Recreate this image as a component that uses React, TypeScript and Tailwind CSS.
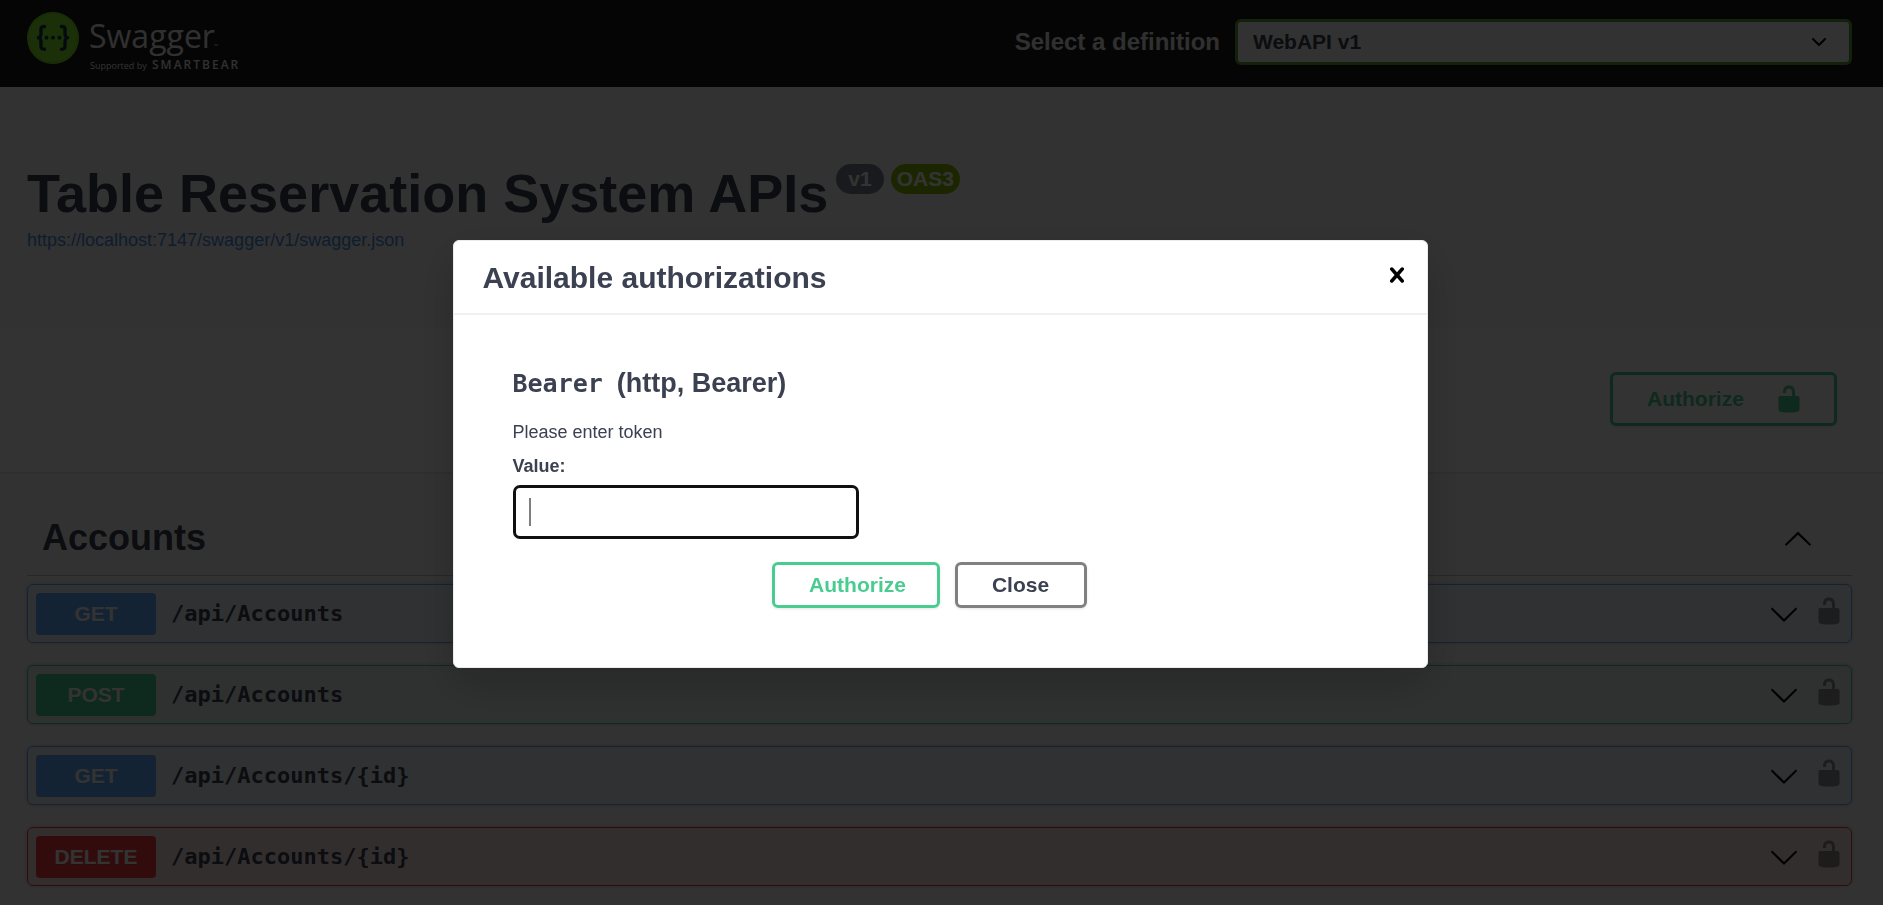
import { useState } from "react";

type Method = "GET" | "POST" | "DELETE";

interface Operation {
  method: Method;
  path: string;
}

const operations: Operation[] = [
  { method: "GET", path: "/api/Accounts" },
  { method: "POST", path: "/api/Accounts" },
  { method: "GET", path: "/api/Accounts/{id}" },
  { method: "DELETE", path: "/api/Accounts/{id}" },
];

const rowStyles: Record<Method, string> = {
  GET: "border-[#61affe] bg-[#61affe]/10",
  POST: "border-[#49cc90] bg-[#49cc90]/10",
  DELETE: "border-[#f93e3e] bg-[#f93e3e]/10",
};

const badgeStyles: Record<Method, string> = {
  GET: "bg-[#61affe]",
  POST: "bg-[#49cc90]",
  DELETE: "bg-[#f93e3e]",
};

function UnlockedIcon() {
  return (
    <svg viewBox="0 0 20 20" className="size-[30px] shrink-0 fill-current" aria-hidden="true">
      <path d="M15.8 8H14V5.6C14 2.703 12.665 1 10 1 7.334 1 6 2.703 6 5.6V6h2v-.801C8 3.754 8.797 3 10 3c1.203 0 2 .754 2 2.199V8H4c-.553 0-1 .646-1 1.199V17c0 .549.428 1.139.951 1.307l1.197.387C5.672 18.861 6.55 19 7.1 19h5.8c.549 0 1.428-.139 1.951-.307l1.196-.387c.524-.167.953-.757.953-1.306V9.199C17 8.646 16.352 8 15.8 8z" />
    </svg>
  );
}

function ArrowUpIcon() {
  return (
    <svg viewBox="0 0 20 20" className="size-[30px] shrink-0" aria-hidden="true">
      <path d="M17.418 14.908c.272.268.709.268.979 0s.271-.701 0-.969l-7.908-7.83c-.27-.268-.707-.268-.979 0l-7.908 7.83c-.27.268-.27.701 0 .969.271.268.709.268.979 0L10 7.767l7.418 7.141z" />
    </svg>
  );
}

function ArrowDownIcon() {
  return (
    <svg viewBox="0 0 20 20" className="size-[30px] shrink-0" aria-hidden="true">
      <path d="M17.418 6.109c.272-.268.709-.268.979 0s.271.701 0 .969l-7.908 7.83c-.27.268-.707.268-.979 0l-7.908-7.83c-.27-.268-.271-.701 0-.969.271-.268.709-.268.979 0L10 13.25l7.418-7.141z" />
    </svg>
  );
}

function CloseIcon() {
  return (
    <svg viewBox="0 0 20 20" className="size-[30px]" aria-hidden="true">
      <path d="M14.348 14.849c-.469.469-1.229.469-1.697 0L10 11.819l-2.651 3.029c-.469.469-1.229.469-1.697 0-.469-.469-.469-1.229 0-1.697l2.758-3.15-2.759-3.152c-.469-.469-.469-1.228 0-1.697.469-.469 1.228-.469 1.697 0L10 8.183l2.651-3.031c.469-.469 1.228-.469 1.697 0 .469.469.469 1.229 0 1.697l-2.758 3.152 2.758 3.15c.469.469.469 1.229 0 1.698z" />
    </svg>
  );
}

function Logo() {
  return (
    <svg viewBox="0 0 216 64" className="h-16 w-[216px]" role="img" aria-label="Swagger, supported by SmartBear">
      <circle cx="26" cy="26" r="26" fill="#85ea2d" />
      <circle cx="26" cy="26" r="24.6" fill="none" stroke="#7ad92b" strokeWidth="1.2" />
      <g fill="none" stroke="#173647" strokeWidth="3.4" strokeLinecap="round" strokeLinejoin="round">
        <path d="M17.5 14.500C13.500 14.200 13.800 17 14 19.500C14.200 23 14 25.400 11.500 25.700C14 26.200 14.200 28.600 14 32C13.800 35 13.800 37.500 17.500 37.300" />
        <path d="M34.500 14.500C38.500 14.200 38.200 17 38 19.500C37.800 23 38 25.400 40.500 25.700C38 26.200 37.800 28.600 38 32C38.200 35 38.200 37.500 34.500 37.300" />
      </g>
      <g fill="#173647">
        <circle cx="19.500" cy="25.700" r="1.900" />
        <circle cx="26" cy="25.700" r="1.900" />
        <circle cx="32.500" cy="25.700" r="1.900" />
      </g>
      <g fill="#f0f0f0" fontFamily="'Open Sans', 'Noto Sans', sans-serif">
        <text x="62" y="36" fontSize="32">Swagger</text>
        <text x="187" y="36" fontSize="5">™</text>
        <text x="63" y="57" fontSize="9">Supported by</text>
        <text x="125" y="57" fontSize="12" fontWeight="600" letterSpacing="2">SMARTBEAR</text>
      </g>
    </svg>
  );
}

function OperationRow({ method, path }: Operation) {
  return (
    <li
      className={`flex h-[59px] items-center rounded-md border pr-[7px] pl-2 shadow-[0_0_4px_rgba(0,0,0,0.19)] ${rowStyles[method]}`}
    >
      <button type="button" className="flex min-w-0 flex-1 items-center gap-[15px] text-left">
        <span
          className={`w-[120px] rounded-[4px] text-center text-[21px] leading-[42px] font-bold text-white [text-shadow:0_1px_0_rgba(0,0,0,0.1)] ${badgeStyles[method]}`}
        >
          {method}
        </span>
        <span className="flex-1 truncate font-['DejaVu_Sans_Mono',monospace] text-[22px] leading-[30px] font-bold">
          {path}
        </span>
        <span className="text-black">
          <ArrowDownIcon />
        </span>
      </button>
      <button type="button" aria-label="Authorization button unlocked" className="pb-[5px] pl-[15px] text-black opacity-40">
        <UnlockedIcon />
      </button>
    </li>
  );
}

function AuthorizationDialog({ onClose }: { onClose: () => void }) {
  const [token, setToken] = useState("");
  return (
    <div className="fixed inset-0 z-10 flex items-center justify-center bg-black/80 pt-[3px] pr-[3px]">
      <div
        role="dialog"
        aria-modal="true"
        aria-labelledby="dialog-title"
        className="w-full max-w-[975px] rounded-md border border-[#ebebeb] bg-white shadow-[0_15px_45px_rgba(0,0,0,0.2)]"
      >
        <div className="flex items-start justify-between border-b-2 border-[#f0f0f0] pt-[19px] pr-[15px] pb-[17px] pl-[29px]">
          <h3 id="dialog-title" className="text-[30px] leading-[36px] font-bold">
            Available authorizations
          </h3>
          <button type="button" aria-label="Close dialog" className="text-black" onClick={onClose}>
            <CloseIcon />
          </button>
        </div>
        <form className="px-[59px] pt-[52px] pb-[59px]" onSubmit={(event) => event.preventDefault()}>
          <h4 className="flex items-baseline gap-[14px] text-[27px] leading-[32px] font-bold">
            <code className="font-['DejaVu_Sans_Mono',monospace] text-[25px] leading-[32px]">Bearer</code>
            <span>(http, Bearer)</span>
          </h4>
          <p className="mt-[21px] text-[18px] leading-[22px]">Please enter token</p>
          <label htmlFor="token" className="mt-3 block text-[18px] leading-[22px] font-bold">
            Value:
          </label>
          <div className="relative mt-2 w-[346px]">
            <input
              id="token"
              type="text"
              value={token}
              onChange={(event) => setToken(event.target.value)}
              className="block h-[54px] w-full rounded-[7px] border-[3px] border-[#101010] bg-white px-[13px] text-[21px] caret-transparent outline-none"
            />
            {token === "" && <span className="absolute top-[13px] left-[16px] h-[28px] w-[2px] bg-[#7f7f7f]" />}
          </div>
          <div className="mt-[23px] flex justify-center gap-[15px] pr-[22px] text-[21px] leading-[24px] font-bold">
            <button
              type="submit"
              className="h-[46px] w-[168px] rounded-md border-[3px] border-[#49cc90] pl-1 text-[#49cc90] shadow-[0_1px_3px_rgba(0,0,0,0.1)]"
            >
              Authorize
            </button>
            <button
              type="button"
              onClick={onClose}
              className="h-[46px] w-[132px] rounded-md border-[3px] border-[#808080] shadow-[0_1px_3px_rgba(0,0,0,0.1)]"
            >
              Close
            </button>
          </div>
        </form>
      </div>
    </div>
  );
}

export default function App() {
  const [dialogOpen, setDialogOpen] = useState(true);
  return (
    <div className="min-h-screen bg-[#fafafa] font-['Liberation_Sans',Arial,sans-serif] text-[#3b4151]">
      <header className="flex items-start justify-between bg-[#1b1b1b] pt-3 pr-[31px] pb-[11px] pl-[27px]">
        <a href="#top">
          <Logo />
        </a>
        <div className="flex items-center gap-[15px] pt-[7px]">
          <label htmlFor="definition" className="text-[24px] leading-[28px] font-bold text-[#f0f0f0]">
            Select a definition
          </label>
          <div className="relative w-[617px]">
            <select
              id="definition"
              className="block h-[46px] w-full appearance-none rounded-md border-[3px] border-[#62a03f] bg-[#f7f7f7] pl-[15px] text-[21px] font-bold"
            >
              <option>WebAPI v1</option>
            </select>
            <svg
              viewBox="0 0 14 8"
              className="pointer-events-none absolute top-[19px] right-[26px] h-2 w-[14px] fill-none stroke-black stroke-2"
              aria-hidden="true"
            >
              <path d="M1 1L7 7L13 1" strokeLinecap="round" strokeLinejoin="round" />
            </svg>
          </div>
        </div>
      </header>

      <main id="top">
        <section className="pt-[77px] pr-[31px] pb-[77px] pl-[27px]">
          <div className="flex items-start">
            <h1 className="text-[54px] leading-[58px] font-bold">Table Reservation System APIs</h1>
            <div className="ml-2 flex gap-[7px] text-[21px] leading-[30px] font-bold text-white">
              <span className="rounded-full bg-[#7d8492] px-3">v1</span>
              <span className="rounded-full bg-[#89bf04] px-[6px]">OAS3</span>
            </div>
          </div>
          <a href="#swagger.json" className="mt-2 block w-fit text-[18px] leading-[20px] text-[#4990e2]">
            https://localhost:7147/swagger/v1/swagger.json
          </a>
        </section>

        <section className="flex justify-end bg-white pt-[45px] pr-[46px] pb-[46px] shadow-[0_1px_3px_rgba(0,0,0,0.15)]">
          <button
            type="button"
            onClick={() => setDialogOpen(true)}
            className="flex h-[54px] w-[227px] items-center justify-between rounded-md border-[3px] border-[#49cc90] pr-[30px] pl-[34px] text-[21px] leading-[24px] font-bold text-[#49cc90] shadow-[0_1px_3px_rgba(0,0,0,0.1)]"
          >
            Authorize
            <UnlockedIcon />
          </button>
        </section>

        <section className="pt-[45px] pr-[31px] pb-[18px] pl-[27px]">
          <div className="flex items-center justify-between border-b border-[#3b4151]/30 pr-[39px] pb-4 pl-[15px]">
            <h2 className="text-[36px] leading-[42px] font-bold">Accounts</h2>
            <button type="button" aria-label="Collapse Accounts" className="text-black">
              <ArrowUpIcon />
            </button>
          </div>
          <ul className="mt-2 flex flex-col gap-[22px]">
            {operations.map((operation) => (
              <OperationRow key={operation.method + operation.path} {...operation} />
            ))}
          </ul>
        </section>
      </main>

      {dialogOpen && <AuthorizationDialog onClose={() => setDialogOpen(false)} />}
    </div>
  );
}
